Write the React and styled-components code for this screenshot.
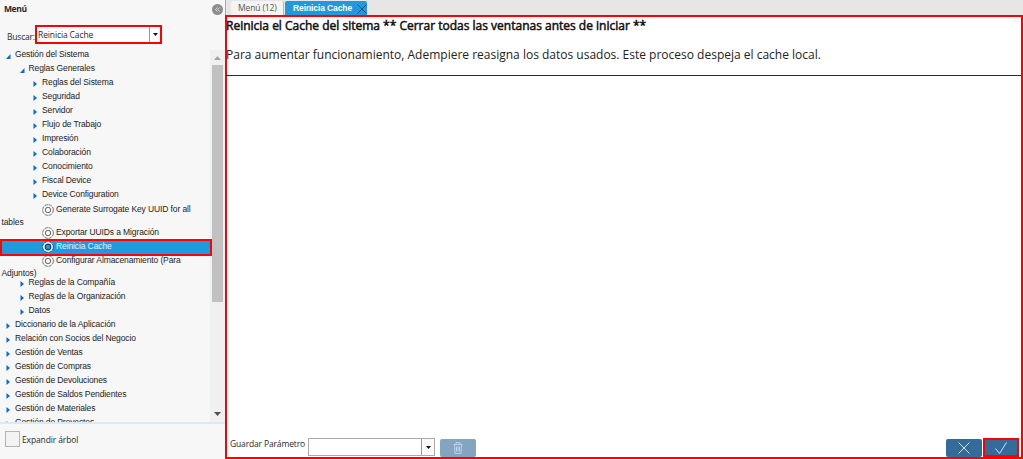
import React from "react";
import styled, { createGlobalStyle } from "styled-components";

const GlobalStyle = createGlobalStyle`
  * { box-sizing: border-box; }
  body { margin: 0; background: #fff; overflow: hidden; }
`;

const ui = `"Open Sans", "Noto Sans", sans-serif`;
const tree = `"Liberation Sans", Arial, sans-serif`;

const Page = styled.div`
  display: flex;
  width: 1023px;
  height: 459px;
  overflow: hidden;
  color: #2a2a2a;
  font-family: ${ui};
`;

const Sidebar = styled.aside`
  display: flex;
  flex-direction: column;
  width: 225px;
  flex: none;
  background: #f7f7f7;
`;

const SidebarHeader = styled.header`
  display: flex;
  justify-content: space-between;
  height: 25px;
  padding: 1px 2px 0 4px;
`;

const SidebarTitle = styled.h2`
  margin: 0;
  font: bold 8.5px/16px ${ui};
  letter-spacing: -0.4px;
`;

const CollapseButton = styled.button`
  display: flex;
  align-items: center;
  justify-content: center;
  width: 11px;
  height: 11px;
  margin: 3px 0 0;
  padding: 0;
  border: 0;
  border-radius: 50%;
  background: #8d8d8d;
`;

const SearchRow = styled.div`
  display: flex;
  height: 25px;
  padding-left: 7px;
`;

const SearchLabel = styled.label`
  width: 28px;
  flex: none;
  font-size: 8.5px;
  line-height: 24px;
  white-space: nowrap;
  letter-spacing: -0.2px;
`;

const SearchBox = styled.div`
  display: flex;
  width: 127px;
  height: 19px;
  border: 2px solid #ff0000;
  background: #fff;
`;

const SearchValue = styled.div`
  flex: 1;
  padding-left: 1px;
  font-size: 8.5px;
  line-height: 16px;
  white-space: nowrap;
  letter-spacing: -0.12px;
`;

const DropButton = styled.div`
  display: flex;
  align-items: center;
  justify-content: center;
  width: ${(p) => p.$width}px;
  border-left: 1px solid #999;
  background: ${(p) => p.$fill || "#fff"};
`;

const TreePane = styled.div`
  display: flex;
  height: 372px;
  overflow: hidden;
`;

const TreeList = styled.ul`
  width: 210px;
  flex: none;
  margin: -2px 0 0;
  padding: 0;
  list-style: none;
`;

const TreeRow = styled.li`
  position: relative;
  height: ${(p) => p.$height || 14}px;
  padding-top: ${(p) => p.$top || 0}px;
  padding-left: ${(p) => p.$indent}px;
  width: 212px;
  font: 8.5px/13px ${tree};
  letter-spacing: -0.11px;
  color: ${(p) => (p.$selected ? "#e4f3fc" : "#222")};
  background: ${(p) => (p.$selected ? "#2199de" : "transparent")};
  white-space: nowrap;
`;

const TreeLine = styled.div`
  display: flex;
  height: 13px;
`;

const Wrapped = styled.div`
  margin-left: ${(p) => -p.$indent + 1.5}px;
`;

const SelectionFrame = styled.div`
  position: absolute;
  z-index: 1;
  left: 0;
  top: -1px;
  width: 212px;
  height: 17px;
  border: 2px solid #ff0000;
`;

const Twisty = styled.svg`
  width: 5px;
  height: 6px;
  flex: none;
  margin: 5px 4px 0 0;
  fill: #0a6bce;
`;

const Gear = styled.svg`
  width: 12px;
  height: 12px;
  flex: none;
  margin: 1px 2px 0 0;
  overflow: visible;
`;

const ScrollTrack = styled.div`
  display: flex;
  flex-direction: column;
  align-items: center;
  width: 15px;
  height: 372px;
  background: #f0f0f0;
`;

const ScrollArrow = styled.svg`
  width: 7px;
  height: 4px;
  flex: none;
  margin: ${(p) => p.$margin};
  fill: ${(p) => p.$fill};
`;

const ScrollThumb = styled.div`
  width: 11px;
  height: 237px;
  background: #c1c1c1;
`;

const SidebarFooter = styled.footer`
  display: flex;
  flex: 1;
  padding: 7px 5px;
  border-top: 2px solid #dce8f6;
`;

const Checkbox = styled.span`
  width: 15px;
  height: 16px;
  border: 1px solid #b5b5b5;
  background: #f3f3f3;
`;

const CheckLabel = styled.span`
  margin-left: 2px;
  font-size: 8.5px;
  line-height: 18px;
  letter-spacing: -0.12px;
`;

const Main = styled.main`
  display: flex;
  flex-direction: column;
  width: 798px;
  flex: none;
`;

const TabBar = styled.nav`
  display: flex;
  height: 15px;
  padding: 1px 0 0 5px;
  background: #e6e6e6;
  border-left: 1px solid #aaa;
`;

const Tab = styled.div`
  display: flex;
  width: ${(p) => p.$width}px;
  padding-left: ${(p) => (p.$active ? 8 : 7)}px;
  margin-right: 1px;
  border-radius: 2px 2px 0 0;
  border-right: ${(p) => (p.$active ? 0 : "1px solid #b8b8b8")};
  background: ${(p) => (p.$active ? "#2199de" : "#f4f4f4")};
  color: ${(p) => (p.$active ? "#fff" : "#555")};
  font: ${(p) => (p.$active ? "bold 8.5px" : "8.5px")} / 14px
    ${(p) => (p.$active ? tree : ui)};
  letter-spacing: ${(p) => (p.$active ? -0.1 : -0.12)}px;
  white-space: nowrap;
`;

const CloseMark = styled.svg`
  width: 10px;
  height: 10px;
  margin: 3px 0 0 5px;
  stroke: #164b70;
  fill: none;
`;

const Panel = styled.section`
  display: flex;
  flex-direction: column;
  flex: 1;
  border: 2px solid #ff0000;
  background: #fff;
`;

const Message = styled.div`
  height: 59px;
  margin-left: -1px;
  border-bottom: 1px solid #06305f;
  color: #222;
  font-size: 12px;
  line-height: 17px;
  white-space: nowrap;
`;

const Headline = styled.p`
  margin: 0 0 12px;
  color: #111;
  -webkit-text-stroke: 0.5px #111;
`;

const Body = styled.p`
  margin: 0;
`;

const Actions = styled.div`
  display: flex;
  align-items: flex-start;
  height: 20px;
  margin-top: auto;
  padding-left: 3px;
`;

const ParamLabel = styled.label`
  width: 78px;
  font-size: 8.5px;
  line-height: 13px;
  letter-spacing: -0.15px;
  white-space: nowrap;
`;

const Combo = styled.div`
  display: flex;
  justify-content: flex-end;
  width: 127px;
  height: 18px;
  margin-top: 1px;
  border: 1px solid #aaa;
`;

const ActionButton = styled.button`
  display: flex;
  align-items: center;
  justify-content: center;
  width: 36px;
  height: ${(p) => (p.$framed ? 19 : 18)}px;
  margin: ${(p) => (p.$framed ? 1 : 2)}px 0 0 ${(p) => p.$left || 0}px;
  padding: 0;
  border: ${(p) => (p.$framed ? "2px solid #ff0000" : "0")};
  border-radius: ${(p) => (p.$framed ? 0 : 2)}px;
  background: ${(p) => (p.$disabled ? "#83a5c2" : "#336b9b")};
`;

const Glyph = styled.svg`
  width: 14px;
  height: 14px;
  flex: none;
  fill: none;
  stroke: ${(p) => p.$stroke || "#d5e2ee"};
  stroke-width: 1;
`;

const Caret = () => (
  <svg width="5" height="3" viewBox="0 0 5 3"><path d="M0 0h5L2.5 3z" fill="#111" /></svg>
);

const GearIcon = ({ selected }) => (
  <Gear viewBox="0 0 12 12">
    {selected ? (
      <>
        <circle cx="6" cy="6" r="5.4" fill="#fff" stroke="#123a58" strokeWidth="0.8" strokeDasharray="3.4 0.84" />
        <circle cx="6" cy="6" r="2.8" fill="#2199de" stroke="#0d3c60" strokeWidth="1.2" />
      </>
    ) : (
      <>
        <circle cx="6" cy="6" r="5.4" fill="none" stroke="#555" strokeWidth="0.8" strokeDasharray="3.4 0.84" />
        <circle cx="6" cy="6" r="2.7" fill="none" stroke="#444" strokeWidth="0.8" />
      </>
    )}
  </Gear>
);

const rows = [
  { text: "Gestión del Sistema", level: 0, open: true },
  { text: "Reglas Generales", level: 1, open: true },
  ...["Reglas del Sistema", "Seguridad", "Servidor", "Flujo de Trabajo", "Impresión", "Colaboración", "Conocimiento", "Fiscal Device", "Device Configuration"].map((text) => ({ text, level: 2 })),
  { text: "Generate Surrogate Key UUID for all", wrap: "tables", process: true, height: 24, top: 1 },
  { text: "Exportar UUIDs a Migración", process: true },
  { text: "Reinicia Cache", process: true, selected: true },
  { text: "Configurar Almacenamiento (Para", wrap: "Adjuntos)", process: true, height: 22 },
  ...["Reglas de la Compañía", "Reglas de la Organización", "Datos"].map((text) => ({ text, level: 1 })),
  ...["Diccionario de la Aplicación", "Relación con Socios del Negocio", "Gestión de Ventas", "Gestión de Compras", "Gestión de Devoluciones", "Gestión de Saldos Pendientes", "Gestión de Materiales", "Gestión de Proyectos"].map((text) => ({ text, level: 0 })),
];

function TreeItem({ text, level, open, wrap, process, selected, height, top }) {
  const indent = process ? 42 : 6 + level * 13.5;
  return (
    <TreeRow $indent={indent} $height={height} $top={top} $selected={selected}>
      <TreeLine>
        {process ? (
          <GearIcon selected={selected} />
        ) : (
          <Twisty viewBox="0 0 5 6"><path d={open ? "M4.5 1v5H0z" : "M.5 0l3.5 3-3.5 3z"} /></Twisty>
        )}
        {text}
      </TreeLine>
      {wrap && <Wrapped $indent={indent}>{wrap}</Wrapped>}
      {selected && <SelectionFrame />}
    </TreeRow>
  );
}

export default function App() {
  return (
    <Page>
      <GlobalStyle />
      <Sidebar>
        <SidebarHeader>
          <SidebarTitle>Menú</SidebarTitle>
          <CollapseButton aria-label="Contraer">
            <svg width="5" height="5" viewBox="0 0 5 5" fill="none" stroke="#eee" strokeWidth=".8"><path d="M2.3.5l-1.8 2 1.8 2M4.6.5l-1.8 2 1.8 2" /></svg>
          </CollapseButton>
        </SidebarHeader>
        <SearchRow>
          <SearchLabel>Buscar:</SearchLabel>
          <SearchBox>
            <SearchValue>Reinicia Cache</SearchValue>
            <DropButton $width={11}><Caret /></DropButton>
          </SearchBox>
        </SearchRow>
        <TreePane>
          <TreeList>{rows.map((r) => <TreeItem key={r.text} {...r} />)}</TreeList>
          <ScrollTrack>
            <ScrollArrow viewBox="0 0 7 4" $margin="6px 0 5px" $fill="#a3a3a3"><path d="M0 4h7L3.5 0z" /></ScrollArrow>
            <ScrollThumb />
            <ScrollArrow viewBox="0 0 7 4" $margin="auto 0 6px" $fill="#505050"><path d="M0 0h7L3.5 4z" /></ScrollArrow>
          </ScrollTrack>
        </TreePane>
        <SidebarFooter>
          <Checkbox />
          <CheckLabel>Expandir árbol</CheckLabel>
        </SidebarFooter>
      </Sidebar>
      <Main>
        <TabBar>
          <Tab $width={53}>Menú (12)</Tab>
          <Tab $active $width={82}>
            Reinicia Cache
            <CloseMark viewBox="0 0 10 10"><path d="M.5.5l9 9M9.5.5l-9 9" /></CloseMark>
          </Tab>
        </TabBar>
        <Panel>
          <Message>
            <Headline>Reinicia el Cache del sitema ** Cerrar todas las ventanas antes de iniciar **</Headline>
            <Body>Para aumentar funcionamiento, Adempiere reasigna los datos usados. Este proceso despeja el cache local.</Body>
          </Message>
          <Actions>
            <ParamLabel>Guardar Parámetro</ParamLabel>
            <Combo><DropButton $width={13} $fill="#fafafa"><Caret /></DropButton></Combo>
            <ActionButton $disabled $left={5} aria-label="Eliminar">
              <Glyph viewBox="0 0 14 14" $stroke="#c0d1e0"><path d="M2.5 3.5h9M5 3.5v-2h4v2M3.5 3.5l.5 9h6l.5-9M5.5 5.5v5M7 5.5v5M8.5 5.5v5" /></Glyph>
            </ActionButton>
            <ActionButton $left={470} aria-label="Cancelar">
              <Glyph viewBox="0 0 14 14"><path d="M1.5 1.5l11 11M12.5 1.5l-11 11" /></Glyph>
            </ActionButton>
            <ActionButton $framed $left={1} aria-label="Aceptar">
              <Glyph viewBox="0 0 14 14"><path d="M1.5 7.5l4 5 7-11" /></Glyph>
            </ActionButton>
          </Actions>
        </Panel>
      </Main>
    </Page>
  );
}
